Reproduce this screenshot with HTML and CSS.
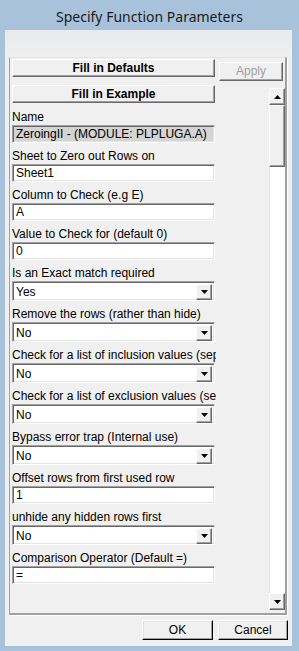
FILE: index.html
```html
<!DOCTYPE html>
<html lang="en">
<head>
    <meta charset="UTF-8">
    <title>Specify Function Parameters</title>
    <link rel="stylesheet" href="styles.css">
</head>
<body>
    <div class="titlebar">Specify Function Parameters</div>

    <div class="client">
        <div class="panel">
            <div class="top-row">
                <div class="btn btn-bold btn-fill">Fill in Defaults</div>
                <div class="btn btn-apply">Apply</div>
            </div>

            <div class="scroll-row">
                <div class="form">
                    <div class="btn btn-bold btn-fill btn-example">Fill in Example</div>

                    <div class="field">
                        <div class="label">Name</div>
                        <div class="input readonly">ZeroingII - (MODULE: PLPLUGA.A)</div>
                    </div>
                    <div class="field">
                        <div class="label">Sheet to Zero out Rows on</div>
                        <div class="input">Sheet1</div>
                    </div>
                    <div class="field">
                        <div class="label">Column to Check (e.g E)</div>
                        <div class="input">A</div>
                    </div>
                    <div class="field">
                        <div class="label">Value to Check for (default 0)</div>
                        <div class="input">0</div>
                    </div>
                    <div class="field">
                        <div class="label">Is an Exact match required</div>
                        <div class="select"><span class="value">Yes</span><span class="drop"><svg width="7" height="4" viewBox="0 0 7 4"><path d="M0 0h7L3.5 4z" fill="#000"/></svg></span></div>
                    </div>
                    <div class="field">
                        <div class="label">Remove the rows (rather than hide)</div>
                        <div class="select"><span class="value">No</span><span class="drop"><svg width="7" height="4" viewBox="0 0 7 4"><path d="M0 0h7L3.5 4z" fill="#000"/></svg></span></div>
                    </div>
                    <div class="field">
                        <div class="label">Check for a list of inclusion values (seperated by commas)</div>
                        <div class="select"><span class="value">No</span><span class="drop"><svg width="7" height="4" viewBox="0 0 7 4"><path d="M0 0h7L3.5 4z" fill="#000"/></svg></span></div>
                    </div>
                    <div class="field">
                        <div class="label">Check for a list of exclusion values (seperated by commas)</div>
                        <div class="select"><span class="value">No</span><span class="drop"><svg width="7" height="4" viewBox="0 0 7 4"><path d="M0 0h7L3.5 4z" fill="#000"/></svg></span></div>
                    </div>
                    <div class="field">
                        <div class="label">Bypass error trap (Internal use)</div>
                        <div class="select"><span class="value">No</span><span class="drop"><svg width="7" height="4" viewBox="0 0 7 4"><path d="M0 0h7L3.5 4z" fill="#000"/></svg></span></div>
                    </div>
                    <div class="field">
                        <div class="label">Offset rows from first used row</div>
                        <div class="input">1</div>
                    </div>
                    <div class="field">
                        <div class="label">unhide any hidden rows first</div>
                        <div class="select"><span class="value">No</span><span class="drop"><svg width="7" height="4" viewBox="0 0 7 4"><path d="M0 0h7L3.5 4z" fill="#000"/></svg></span></div>
                    </div>
                    <div class="field">
                        <div class="label">Comparison Operator (Default =)</div>
                        <div class="input">=</div>
                    </div>
                </div>

                <div class="scrollbar">
                    <div class="sb-btn"><svg width="7" height="4" viewBox="0 0 7 4"><path d="M0 4h7L3.5 0z" fill="#000"/></svg></div>
                    <div class="sb-thumb"></div>
                    <div class="sb-track"></div>
                    <div class="sb-btn"><svg width="7" height="4" viewBox="0 0 7 4"><path d="M0 0h7L3.5 4z" fill="#000"/></svg></div>
                </div>
            </div>
        </div>

        <div class="footer">
            <div class="btn btn-dlg">OK</div>
            <div class="btn btn-dlg btn-cancel">Cancel</div>
        </div>
    </div>
</body>
</html>
```

FILE: styles.css
```css
* {
    box-sizing: border-box;
}

body {
    margin: 0;
    width: 299px;
    height: 651px;
    overflow: hidden;
    background: #a9c2dc;
    font-family: "Liberation Sans", Arial, sans-serif;
    font-size: 12px;
    color: #000;
}

.titlebar {
    height: 30px;
    padding-top: 7px;
    text-align: center;
    font-family: "Noto Sans", "Open Sans", sans-serif;
    font-size: 14px;
    line-height: 20px;
    color: #1a1a1a;
}

.client {
    margin-left: 5px;
    width: 287px;
    height: 616px;
    background: linear-gradient(#e7e9ec, #f0f0f0 28px);
    padding-top: 27px;
}

/* sunken frame that holds the parameter list */
.panel {
    margin-left: 4px;
    width: 278px;
    height: 558px;
    border-left: 1px solid #a0a0a0;
    border-top: 1px solid #e3e3e3;
    border-right: 2px solid #a0a0a0;
    border-bottom: 2px solid #a0a0a0;
    box-shadow: 1px 1px 0 #fff;
    padding-left: 2px;
    background: #f0f0f0;
}

.top-row {
    display: flex;
    align-items: flex-start;
    height: 23px;
}

.btn {
    background: #f0f0f0;
    border: 1px solid;
    border-color: #fff #696969 #696969 #fff;
    box-shadow: inset -1px -1px 0 #a0a0a0;
    text-align: center;
    line-height: 16px;
    white-space: nowrap;
}

.btn-bold {
    font-weight: bold;
}

.btn-fill {
    width: 203px;
    height: 18px;
    margin-top: 1px;
}

.btn-apply {
    width: 64px;
    height: 19px;
    margin-top: 4px;
    margin-left: 4px;
    color: #a0a0a0;
}

.scroll-row {
    display: flex;
    height: 532px;
}

.form {
    width: 204px;
    overflow: hidden;
}

.btn-example {
    margin-top: 4px;
    margin-bottom: 6px;
}

.field {
    margin-bottom: 5px;
}

.label {
    line-height: 16px;
    white-space: nowrap;
    overflow: hidden;
}

.input,
.select {
    width: 203px;
    background: #fff;
    border: 1px solid;
    border-color: #a0a0a0 #fff #fff #a0a0a0;
    box-shadow: inset 1px 1px 0 #696969, inset -1px -1px 0 #e3e3e3;
    white-space: nowrap;
    overflow: hidden;
}

.input {
    height: 18px;
    padding: 1px 3px 0;
    line-height: 15px;
}

.input.readonly {
    background: #d4d4d4;
}

.select {
    height: 20px;
    display: flex;
    padding: 2px 2px 2px 3px;
}

.select .value {
    flex: 1;
    line-height: 16px;
}

.select .drop {
    width: 16px;
    height: 16px;
    border: 1px solid;
    border-color: #fff #696969 #696969 #fff;
    box-shadow: inset -1px -1px 0 #a0a0a0;
    background: #f0f0f0;
    display: flex;
    align-items: center;
    justify-content: center;
}

.scrollbar {
    margin-left: auto;
    margin-top: 7px;
    width: 16px;
    height: 522px;
    display: flex;
    flex-direction: column;
}

.sb-btn {
    height: 17px;
    background: #f0f0f0;
    border: 1px solid;
    border-color: #fff #696969 #696969 #fff;
    box-shadow: inset -1px -1px 0 #a0a0a0;
    display: flex;
    align-items: center;
    justify-content: center;
}

.sb-thumb {
    height: 62px;
    background: #f0f0f0;
    border: 1px solid;
    border-color: #fff #696969 #696969 #fff;
    box-shadow: inset -1px -1px 0 #a0a0a0;
}

.sb-track {
    flex: 1;
    background: #fff;
    border-left: 1px solid #e3e3e3;
}

.footer {
    display: flex;
    justify-content: flex-end;
    gap: 5px;
    padding-right: 4px;
    margin-top: 5px;
}

.btn-dlg {
    width: 71px;
    height: 20px;
    line-height: 18px;
    border-color: #fff #000 #000 #fff;
    box-shadow: inset -1px -1px 0 #a0a0a0, inset 1px 1px 0 #e3e3e3;
}

.btn-cancel {
    width: 70px;
}
```
